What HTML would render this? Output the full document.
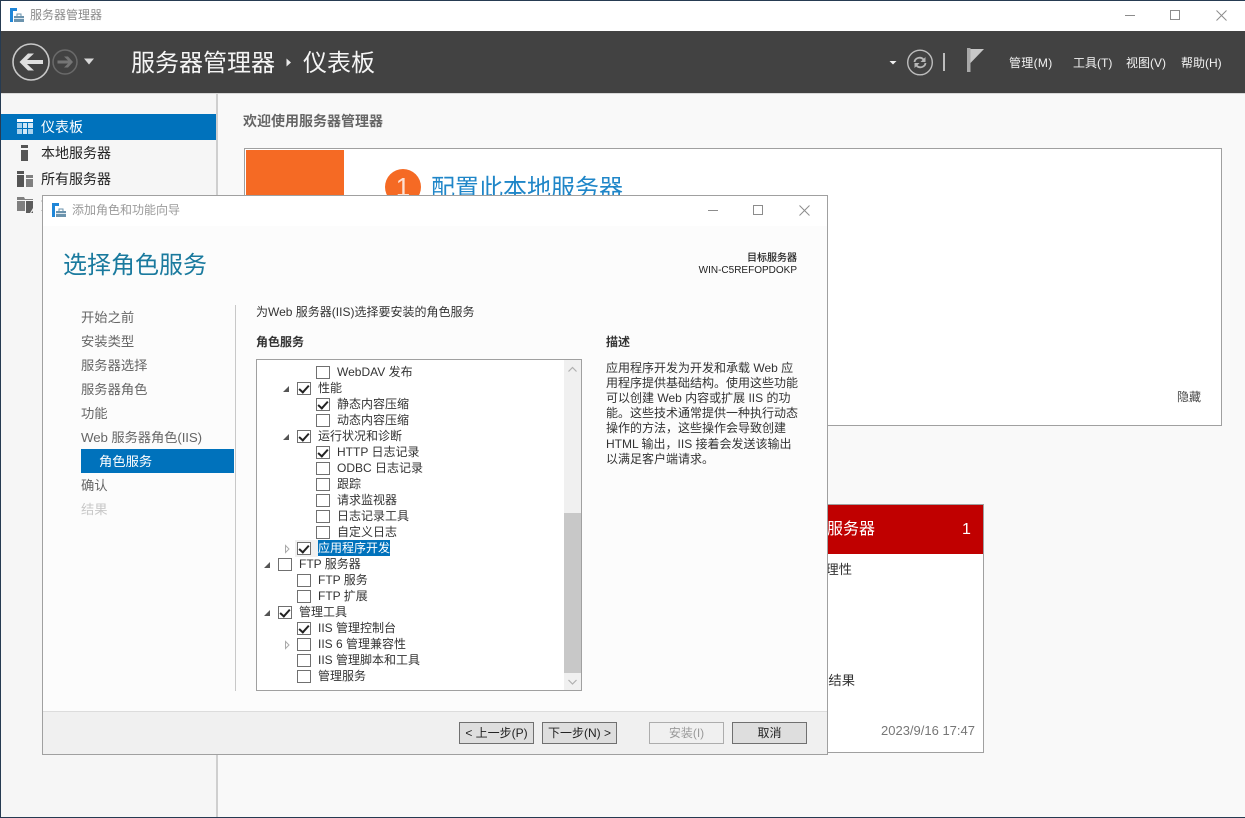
<!DOCTYPE html>
<html lang="zh-CN"><head><meta charset="utf-8"><title>服务器管理器</title>
<style>
html,body{margin:0;padding:0;width:1245px;height:818px;overflow:hidden;background:#f9f9f9}
body{position:relative;font-family:"Liberation Sans","Noto Sans CJK SC",sans-serif;color:#333}
div,span,svg{position:absolute;box-sizing:border-box}
.t{white-space:nowrap;line-height:16px;height:16px;font-size:12px}
.n{font-size:13.3px;color:#666;left:81px}
.s{font-size:14px;left:41px;color:#222}
.m{font-size:12px;color:#f2f2f2;top:55px}
.r{font-size:12px;color:#333;margin-top:1px}
.c{width:14px;height:13px;margin-top:1px;border:1px solid #707070;background:#fff}
.c.k::after{content:"";position:absolute;left:3.2px;top:0;width:4px;height:8px;border:solid #222;border-width:0 2px 2px 0;transform:rotate(42deg)}
.b{top:722px;width:75px;height:22px;border:1px solid #707070;background:#dedede;font-size:12px;line-height:20px;text-align:center;color:#222;white-space:nowrap}
.d{font-size:12px;left:606px;color:#333}
</style></head><body>

<!-- window frame -->
<div style="left:0;top:0;width:1245px;height:818px;border:1px solid #263b52;border-right:0;background:#f9f9f9"></div>
<div style="left:1px;top:1px;width:1244px;height:30px;background:#fff"></div>
<svg style="left:10px;top:8px" width="15" height="15" viewBox="0 0 15 15"><rect x="0" y="0" width="7" height="3" fill="#1f86d8"/><rect x="0" y="3" width="3" height="11" fill="#1f86d8"/><path d="M4 8h10v6H4z" fill="#6b93ad"/><path d="M7 8V6h4v2" fill="none" stroke="#6b93ad"/><path d="M4 10.5h10" stroke="#dce7ee"/></svg>
<div class="t" style="left:30px;top:7px;color:#8a8a8a">服务器管理器</div>
<svg style="left:1120px;top:5px" width="115" height="20" viewBox="0 0 115 20" fill="none" stroke="#8c8c8c"><path d="M5 10.500h10"/><rect x="50.500" y="5.500" width="9" height="9"/><path d="M96.500 5.500l10 10M106.500 5.500l-10 10"/></svg>

<!-- dark header -->
<div style="left:1px;top:31px;width:1244px;height:62px;background:#424242"></div>
<div style="left:1px;top:93px;width:1244px;height:1px;background:#d8d8d8"></div>
<svg style="left:10px;top:40px" width="90" height="44" viewBox="0 0 90 44">
<circle cx="21" cy="22" r="18" fill="none" stroke="#c8c8c8" stroke-width="1.6"/>
<path d="M9.500 22L18 13.500h6L17 20h16v4H17l7 6.500h-6z" fill="#dedede"/>
<circle cx="55" cy="22" r="12" fill="none" stroke="#6a6a6a" stroke-width="1.500"/>
<path d="M47.500 20.500H58l-4-4h4l5 5.500-5 5.500h-4l4-4H47.500z" fill="#757575"/>
<path d="M74 18.500h10l-5 6z" fill="#d8d8d8"/>
</svg>
<div class="t" style="left:131px;top:48px;font-size:24px;line-height:32px;height:32px;color:#f5f5f5">服务器管理器</div>
<svg style="left:286px;top:58px" width="6" height="9" viewBox="0 0 6 9"><path d="M0.500 0.500l4.500 4-4.500 4z" fill="#e8e8e8"/></svg>
<div class="t" style="left:303px;top:48px;font-size:24px;line-height:32px;height:32px;color:#f5f5f5">仪表板</div>
<svg style="left:885px;top:46px" width="105" height="30" viewBox="0 0 105 30">
<path d="M4.500 15h7l-3.500 3.500z" fill="#f0f0f0"/>
<circle cx="35" cy="16.500" r="12.300" fill="none" stroke="#bdbdbd" stroke-width="1.400"/>
<path d="M29.500 16c.5-4 6-6 9-2.500M40.500 17c-.5 4-6 6-9 2.500" fill="none" stroke="#b8b8b8" stroke-width="1.800"/>
<path d="M40.500 11v5h-5zM29.500 22v-5h5z" fill="#b8b8b8"/>
<rect x="58" y="7" width="2" height="18" fill="#bdbdbd"/>
<rect x="82" y="2" width="3.500" height="24" fill="#a8a8a8"/>
<path d="M85.500 3H99L85.500 17z" fill="#c8c8c8"/>
</svg>
<div class="t m" style="left:1009px;letter-spacing:.3px">管理(M)</div>
<div class="t m" style="left:1073px">工具(T)</div>
<div class="t m" style="left:1126px">视图(V)</div>
<div class="t m" style="left:1181px">帮助(H)</div>

<!-- sidebar -->
<div style="left:1px;top:94px;width:215px;height:723px;background:#f6f6f6"></div>
<div style="left:216px;top:94px;width:2px;height:723px;background:#cfcfcf"></div>
<div style="left:1px;top:114px;width:215px;height:26px;background:#0072bc"></div>
<svg style="left:17px;top:119px" width="17" height="16" viewBox="0 0 17 16"><rect width="16" height="3" fill="#fff"/><g fill="#a9d3ee"><rect x="0" y="4" width="5" height="5"/><rect x="0" y="10" width="5" height="5"/><rect x="11" y="10" width="5" height="5"/><rect x="11" y="4" width="5" height="5" fill="#d3e8f6"/></g><rect x="6" y="4" width="4" height="5" fill="#d3e8f6"/><rect x="6" y="10" width="4" height="5" fill="#d3e8f6"/></svg>
<div class="t s" style="top:119px;color:#fff">仪表板</div>
<svg style="left:17px;top:145px" width="17" height="17" viewBox="0 0 17 17"><rect x="4" y="0" width="7" height="3" fill="#555"/><rect x="4" y="5" width="7" height="11" fill="#555"/></svg>
<div class="t s" style="top:145px">本地服务器</div>
<svg style="left:17px;top:171px" width="17" height="17" viewBox="0 0 17 17"><rect width="7" height="3" fill="#555"/><rect y="4" width="7" height="12" fill="#555"/><rect x="9" y="4" width="7" height="3" fill="#808080"/><rect x="9" y="8" width="7" height="8" fill="#808080"/></svg>
<div class="t s" style="top:171px">所有服务器</div>
<svg style="left:17px;top:197px" width="17" height="17" viewBox="0 0 17 17"><path d="M0 0h7l1 2h8v1H0z" fill="#808080"/><rect x="0" y="4" width="8" height="10" fill="#808080"/><rect x="9" y="4" width="7" height="12" fill="#5c5c5c"/><path d="M16 11v3l-2 2h-1z" fill="#ececec"/></svg>
<div class="t s" style="top:197px">文件和存储服务</div>

<!-- main content -->
<div class="t" style="left:243px;top:113px;font-size:14px;font-weight:bold;color:#666">欢迎使用服务器管理器</div>
<div style="left:244px;top:148px;width:978px;height:278px;background:#fff;border:1px solid #a0a0a0"></div>
<div style="left:246px;top:150px;width:98px;height:274px;background:#f56a24"></div>
<div style="left:385px;top:169px;width:36px;height:36px;border-radius:50%;background:#f56a24"></div>
<div class="t" style="left:385px;top:171px;width:36px;height:32px;line-height:32px;font-size:26px;color:rgba(255,255,255,.8);text-align:center">1</div>
<div class="t" style="left:431px;top:173px;font-size:24px;line-height:32px;height:32px;color:#1f86c8">配置此本地服务器</div>
<div class="t" style="left:1177px;top:389px;color:#444">隐藏</div>

<!-- background card -->
<div style="left:700px;top:504px;width:284px;height:249px;background:#fff;border:1px solid #a0a0a0"></div>
<div style="left:700px;top:505px;width:283px;height:49px;background:#c00000"></div>
<div class="t" style="left:827px;top:522px;font-size:16px;color:#fff">服务器</div>
<div class="t" style="left:962px;top:522px;font-size:16px;color:#fff">1</div>
<div class="t" style="right:393px;top:562px;font-size:13.300px;color:#333">管理性</div>
<div class="t" style="right:390px;top:673px;font-size:13.300px;color:#333">BPA 结果</div>
<div class="t" style="left:881px;top:723px;font-size:13px;color:#777">2023/9/16 17:47</div>

<!-- dialog -->
<div style="left:42px;top:195px;width:786px;height:560px;background:#fff;border:1px solid #a0a0a0"></div>
<div style="left:43px;top:226px;width:784px;height:485px;background:#fcfcfc"></div>
<svg style="left:52px;top:203px" width="15" height="15" viewBox="0 0 15 15"><rect x="0" y="0" width="7" height="3" fill="#1f86d8"/><rect x="0" y="3" width="3" height="11" fill="#1f86d8"/><path d="M4 8h10v6H4z" fill="#6b93ad"/><path d="M7 8V6h4v2" fill="none" stroke="#6b93ad"/><path d="M4 10.500h10" stroke="#dce7ee"/></svg>
<div class="t" style="left:72px;top:202px;color:#9a9a9a">添加角色和功能向导</div>
<svg style="left:703px;top:200px" width="115" height="20" viewBox="0 0 115 20" fill="none" stroke="#8c8c8c"><path d="M5 10.500h10"/><rect x="50.500" y="5.500" width="9" height="9"/><path d="M96.500 5.500l10 10M106.500 5.500l-10 10"/></svg>
<div class="t" style="left:63px;top:250px;font-size:24px;line-height:32px;height:32px;color:#1a7a9e">选择角色服务</div>
<div class="t" style="left:697px;width:100px;text-align:right;top:251px;font-size:10px;color:#222;text-shadow:0 0 .4px #222">目标服务器</div>
<div class="t" style="left:687px;width:110px;text-align:right;top:263px;font-size:10px;color:#222">WIN-C5REFOPDOKP</div>

<div class="t n" style="top:310px">开始之前</div>
<div class="t n" style="top:334px">安装类型</div>
<div class="t n" style="top:358px">服务器选择</div>
<div class="t n" style="top:382px">服务器角色</div>
<div class="t n" style="top:406px">功能</div>
<div class="t n" style="top:430px;letter-spacing:-.1px">Web 服务器角色(IIS)</div>
<div style="left:81px;top:449px;width:153px;height:24px;background:#0072bc"></div>
<div class="t n" style="top:454px;left:99px;color:#fff">角色服务</div>
<div class="t n" style="top:478px">确认</div>
<div class="t n" style="top:502px;color:#c8c8c8">结果</div>
<div style="left:235px;top:305px;width:1px;height:386px;background:#c8c8c8"></div>

<div class="t" style="left:256px;top:304px;color:#333">为Web 服务器(IIS)选择要安装的角色服务</div>
<div class="t" style="left:256px;top:334px;font-weight:bold;color:#333">角色服务</div>
<div class="t" style="left:606px;top:334px;font-weight:bold;color:#333">描述</div>

<!-- tree list -->
<div style="left:256px;top:359px;width:326px;height:332px;background:#fff;border:1px solid #a0a0a0"></div>
<div style="left:564px;top:360px;width:17px;height:330px;background:#f0f0f0"></div>
<div style="left:564px;top:513px;width:17px;height:160px;background:#c8c8c8"></div>
<svg style="left:564px;top:360px" width="17" height="330" viewBox="0 0 17 330" fill="none" stroke="#b0b0b0" stroke-width="1.200"><path d="M4.500 11.500l4-4 4 4M4.500 320l4 4 4-4"/></svg>

<div class="c" style="left:316px;top:365px"></div><div class="t r" style="left:337px;top:363px">WebDAV 发布</div>
<div class="c k" style="left:297px;top:381px"></div><div class="t r" style="left:318px;top:379px">性能</div>
<div class="c k" style="left:316px;top:397px"></div><div class="t r" style="left:337px;top:395px">静态内容压缩</div>
<div class="c" style="left:316px;top:413px"></div><div class="t r" style="left:337px;top:411px">动态内容压缩</div>
<div class="c k" style="left:297px;top:429px"></div><div class="t r" style="left:318px;top:427px">运行状况和诊断</div>
<div class="c k" style="left:316px;top:445px"></div><div class="t r" style="left:337px;top:443px">HTTP 日志记录</div>
<div class="c" style="left:316px;top:461px"></div><div class="t r" style="left:337px;top:459px">ODBC 日志记录</div>
<div class="c" style="left:316px;top:477px"></div><div class="t r" style="left:337px;top:475px">跟踪</div>
<div class="c" style="left:316px;top:493px"></div><div class="t r" style="left:337px;top:491px">请求监视器</div>
<div class="c" style="left:316px;top:509px"></div><div class="t r" style="left:337px;top:507px">日志记录工具</div>
<div class="c" style="left:316px;top:525px"></div><div class="t r" style="left:337px;top:523px">自定义日志</div>
<div style="left:295px;top:540px;width:23px;height:17px;background:#f0f0f0"></div>
<div class="c k" style="left:297px;top:541px"></div>
<div style="left:318px;top:540px;width:72px;height:16px;background:#0072bc"></div>
<div class="t r" style="left:318px;top:539px;color:#fff">应用程序开发</div>
<div class="c" style="left:278px;top:557px"></div><div class="t r" style="left:299px;top:555px">FTP 服务器</div>
<div class="c" style="left:297px;top:573px"></div><div class="t r" style="left:318px;top:571px">FTP 服务</div>
<div class="c" style="left:297px;top:589px"></div><div class="t r" style="left:318px;top:587px">FTP 扩展</div>
<div class="c k" style="left:278px;top:605px"></div><div class="t r" style="left:299px;top:603px">管理工具</div>
<div class="c k" style="left:297px;top:621px"></div><div class="t r" style="left:318px;top:619px">IIS 管理控制台</div>
<div class="c" style="left:297px;top:637px"></div><div class="t r" style="left:318px;top:635px">IIS 6 管理兼容性</div>
<div class="c" style="left:297px;top:653px"></div><div class="t r" style="left:318px;top:651px">IIS 管理脚本和工具</div>
<div class="c" style="left:297px;top:669px"></div><div class="t r" style="left:318px;top:667px">管理服务</div>

<svg style="left:256px;top:360px" width="40" height="330" viewBox="0 0 40 330">
<g fill="#555"><path d="M33 26v6h-6zM33 74v6h-6zM14 202v6H8zM14 250v6H8z"/></g>
<g fill="#fff" stroke="#aaa"><path d="M29.500 185.500v7l3.500-3.500zM29.500 281.500v7l3.500-3.500z"/></g>
</svg>

<!-- description -->
<div class="t d" style="top:360px">应用程序开发为开发和承载 Web 应</div>
<div class="t d" style="top:375px">用程序提供基础结构。使用这些功能</div>
<div class="t d" style="top:390px">可以创建 Web 内容或扩展 IIS 的功</div>
<div class="t d" style="top:405px">能。这些技术通常提供一种执行动态</div>
<div class="t d" style="top:420px">操作的方法，这些操作会导致创建</div>
<div class="t d" style="top:436px">HTML 输出，IIS 接着会发送该输出</div>
<div class="t d" style="top:451px">以满足客户端请求。</div>

<!-- footer -->
<div style="left:43px;top:711px;width:784px;height:43px;background:#f0f0f0;border-top:1px solid #dcdcdc"></div>
<div class="b" style="left:459px">&lt; 上一步(P)</div>
<div class="b" style="left:542px">下一步(N) &gt;</div>
<div class="b" style="left:649px;background:#f0f0f0;border-color:#adadad;color:#9a9a9a">安装(I)</div>
<div class="b" style="left:732px">取消</div>

</body></html>
